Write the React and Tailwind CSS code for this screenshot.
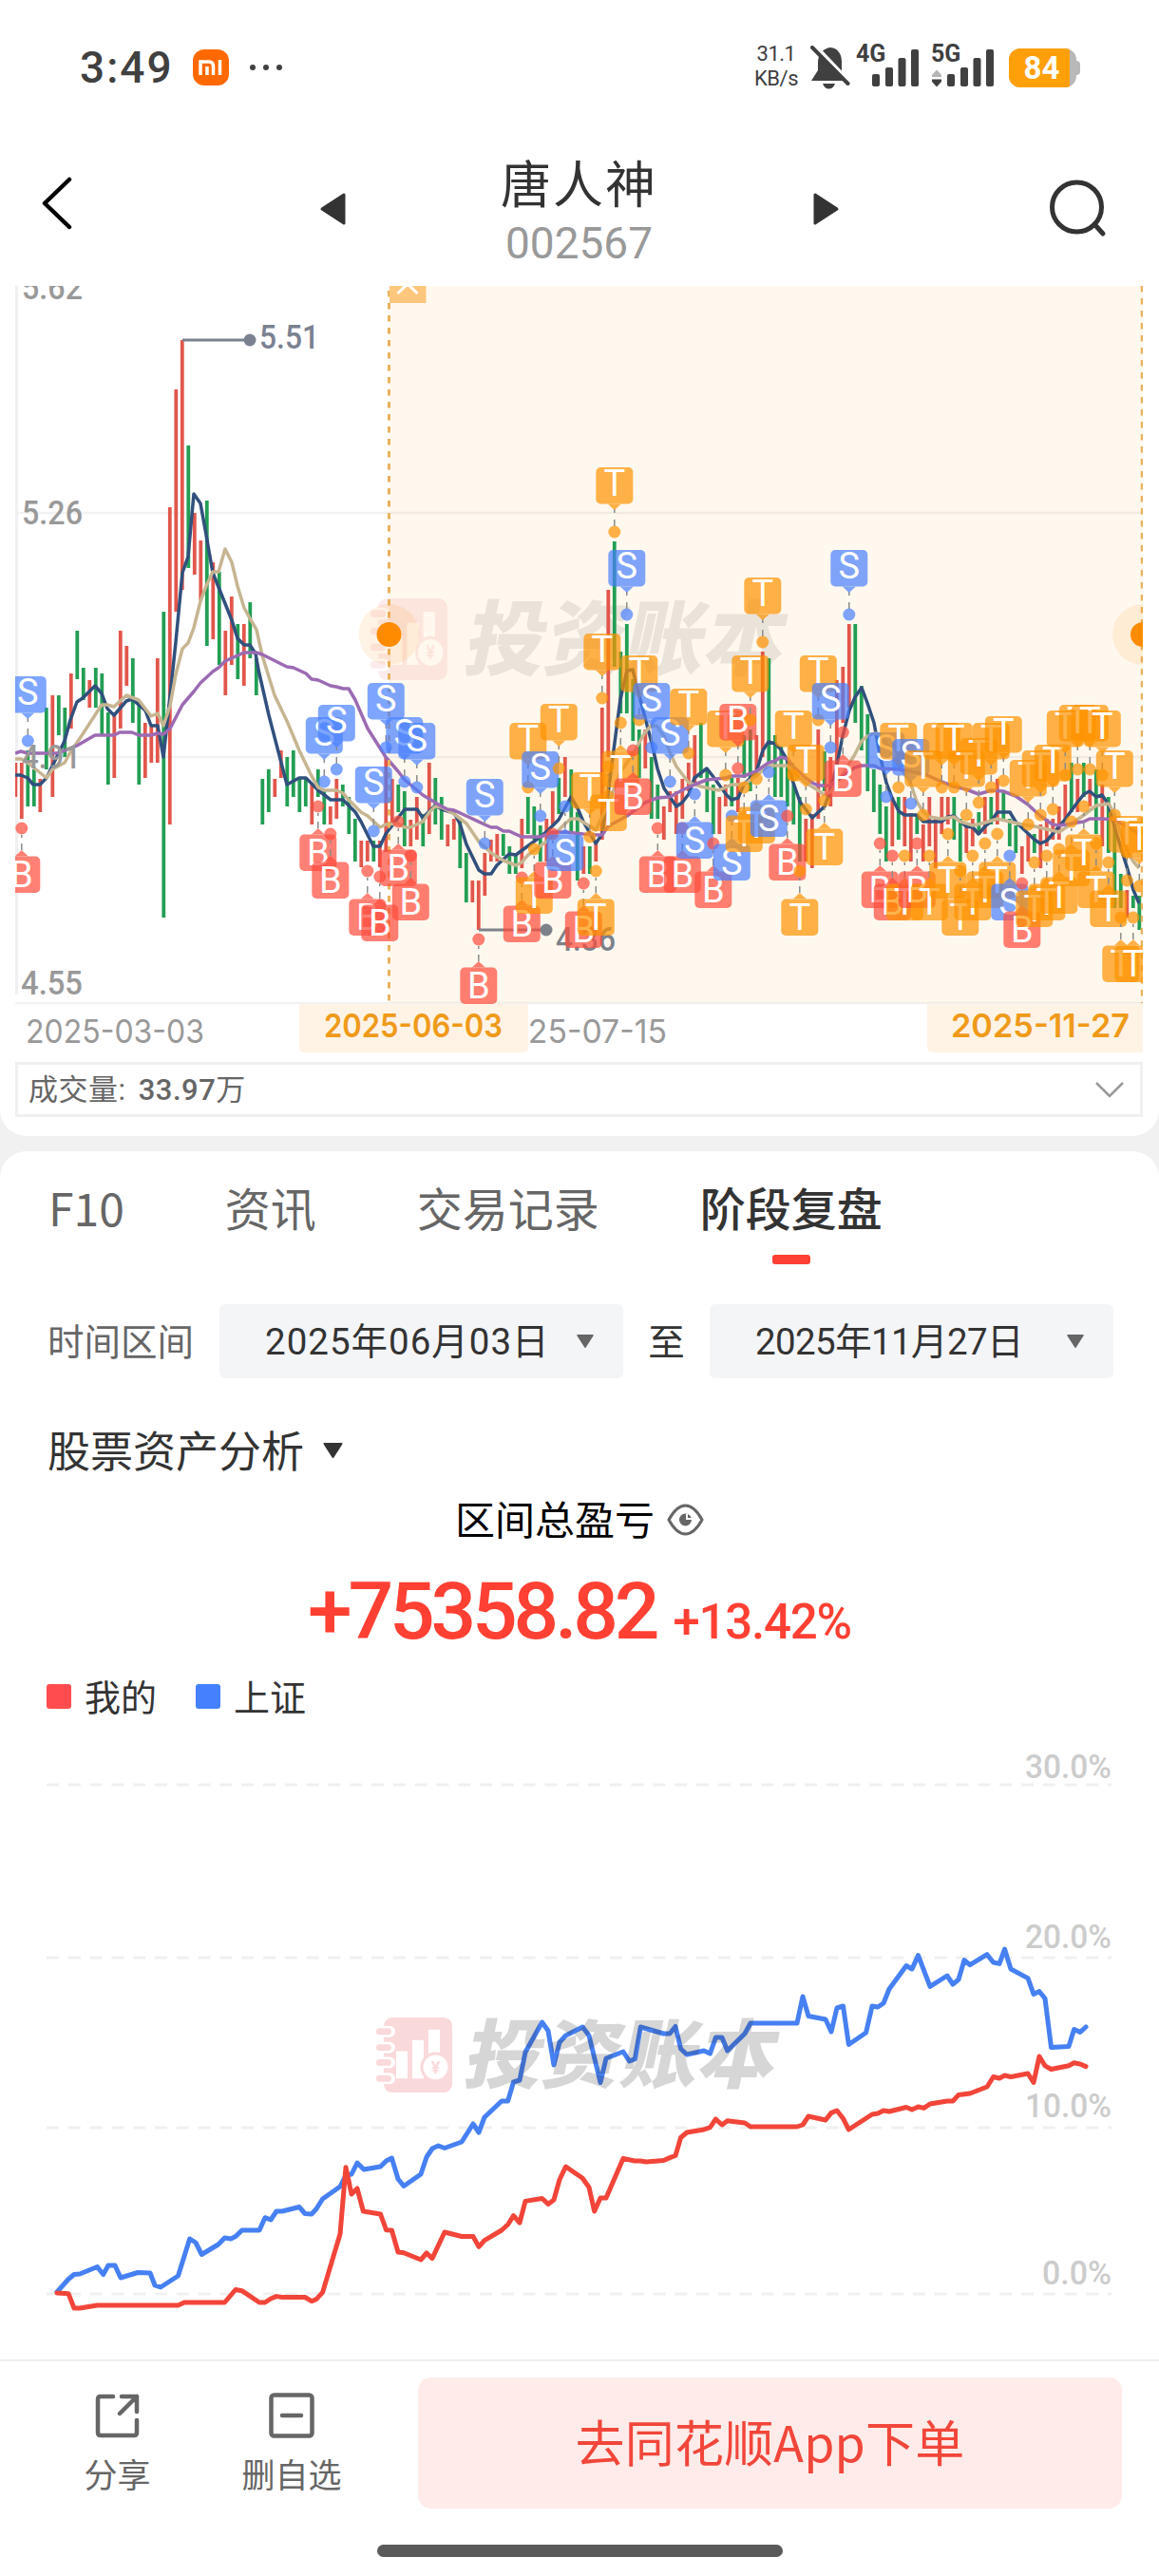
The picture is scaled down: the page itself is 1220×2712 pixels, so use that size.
import React from 'react';

const CN = "font-['Noto_Sans_CJK_SC',sans-serif]";
const NUM = "font-[Roboto,'Noto_Sans_CJK_SC',sans-serif]";

// [direction, high, low] in chart pixels, one row per trading day
const candles = [
  ['r', 803, 839], ['r', 803, 862], ['g', 790, 849], ['g', 810, 849], ['r', 820, 855], ['g', 745, 810],
  ['r', 732, 839], ['g', 732, 774], ['g', 745, 797], ['r', 709, 767], ['g', 664, 715], ['g', 703, 737],
  ['r', 716, 745], ['g', 703, 745], ['g', 709, 774], ['g', 750, 826], ['r', 752, 819], ['r', 664, 767],
  ['r', 680, 722], ['g', 693, 761], ['g', 738, 826], ['r', 761, 819], ['r', 765, 803], ['r', 693, 803],
  ['g', 644, 966], ['r', 534, 868], ['r', 410, 644], ['r', 358, 621], ['g', 469, 598], ['r', 540, 605],
  ['r', 569, 632], ['g', 527, 680], ['r', 592, 673], ['g', 602, 700], ['r', 664, 732], ['r', 628, 700],
  ['g', 657, 715], ['r', 657, 722], ['g', 634, 693], ['g', 693, 732], ['g', 820, 868], ['g', 810, 855],
  ['r', 820, 839], ['r', 790, 819], ['g', 797, 849], ['g', 790, 839], ['g', 820, 855], ['g', 820, 849],
  ['r', 826, 868], ['g', 810, 839], ['g', 833, 868], ['r', 849, 868], ['r', 820, 862], ['g', 826, 849],
  ['g', 839, 878], ['g', 862, 907], ['r', 885, 913], ['r', 885, 907], ['g', 885, 907], ['r', 885, 913],
  ['r', 797, 897], ['r', 820, 868], ['g', 826, 855], ['g', 833, 891], ['r', 863, 891], ['r', 839, 884],
  ['g', 857, 891], ['r', 803, 878], ['g', 819, 868], ['g', 839, 884], ['r', 868, 891], ['r', 862, 884],
  ['g', 862, 914], ['g', 898, 950], ['r', 927, 950], ['r', 927, 979], ['r', 898, 943], ['r', 884, 907],
  ['r', 878, 907], ['g', 878, 901], ['g', 891, 920], ['g', 898, 920], ['r', 862, 914], ['g', 839, 878],
  ['g', 849, 884], ['g', 869, 907], ['r', 862, 907], ['r', 833, 868], ['g', 819, 857], ['r', 797, 839],
  ['g', 810, 878], ['g', 855, 927], ['r', 891, 920], ['g', 891, 920], ['r', 886, 907], ['r', 745, 884],
  ['r', 621, 797], ['g', 570, 702], ['g', 686, 751], ['g', 657, 751], ['g', 715, 780], ['g', 768, 819],
  ['r', 768, 809], ['g', 797, 862], ['g', 826, 862], ['r', 849, 884], ['r', 833, 855], ['r', 833, 878],
  ['r', 820, 862], ['r', 803, 833], ['r', 774, 826], ['g', 761, 819], ['g', 809, 855], ['g', 826, 878],
  ['r', 839, 878], ['r', 826, 849], ['g', 819, 849], ['r', 819, 855], ['g', 774, 819], ['g', 768, 833],
  ['r', 774, 810], ['r', 686, 797], ['g', 693, 803], ['g', 774, 839], ['g', 786, 839], ['g', 801, 849],
  ['g', 826, 868], ['g', 839, 907], ['r', 862, 907], ['r', 857, 914], ['r', 768, 862], ['g', 791, 833],
  ['r', 797, 849], ['r', 716, 833], ['r', 702, 761], ['r', 657, 745], ['g', 657, 761], ['g', 722, 790],
  ['g', 752, 833], ['g', 810, 855], ['g', 826, 878], ['g', 849, 907], ['r', 839, 891], ['g', 839, 884],
  ['r', 839, 891], ['r', 856, 907], ['g', 857, 878], ['r', 868, 907], ['r', 839, 891], ['r', 862, 914],
  ['r', 839, 878], ['r', 839, 868], ['g', 839, 884], ['g', 862, 907], ['r', 868, 898], ['r', 862, 891],
  ['g', 855, 878], ['r', 839, 878], ['g', 839, 868], ['r', 820, 868], ['g', 832, 862], ['g', 862, 891],
  ['g', 869, 898], ['r', 891, 920], ['r', 878, 907], ['g', 878, 898], ['r', 868, 914], ['r', 862, 891],
  ['r', 862, 884], ['r', 849, 884], ['r', 826, 862], ['g', 803, 855], ['r', 820, 855], ['g', 803, 839],
  ['r', 820, 849], ['g', 810, 878], ['r', 826, 891], ['g', 839, 898], ['g', 868, 956], ['g', 920, 956],
  ['r', 937, 966], ['g', 943, 956], ['g', 943, 979],
];

// buy / sell / T marks: type, day index, u = above the candle, d = below it
const marks =
  'B1d S2u B49d S50u B51d S52u B57d S58u B59d S60u B62d S63u B64d S65u B75d S76u B82d T83u T84d S85u B87d T88u S89d B92d T93u T94d T95u T96d T97u T98d S99u B100d T101u S103u B104d S106u B108d T109u S110d B113d T115u S116d B117u T118d T119u T120d T121u S122d B125d T126u T127d T128u T130u T131d S132u B134d S135u B140d S141u B142d T143u T144d S145u B146d T147u T148d T150u T151d T152u T153d T154u T155d T156u T157d T158u T159d T160u S161d B163d T164u T165d T166u T167d T168u T169d T170u T171d T172u T173d T174u T175d T176u T177d T178u T179d T180u T181d T182u'
    .split(' ')
    .map((m) => ({ type: m[0], day: parseInt(m.slice(1), 10), up: m.endsWith('u') }));

const ma5 =
  '16,816 22,816 29,819 35,826 42,826 49,819 68,780 74,758 81,739 87,735 100,722 107,730 113,746 120,753 133,738 139,736 153,748 159,764 166,764 172,797 179,733 185,676 192,603 198,586 204,520 211,530 217,563 224,603 230,618 244,653 250,672 257,679 263,679 269,688 272,705 283,753 296,803 302,826 315,819 322,819 335,832 348,842 361,842 374,855 380,865 393,891 400,891 406,878 426,852 439,852 445,861 458,848 465,852 478,856 484,867 491,889 504,916 510,920 517,920 523,911 536,899 543,900 562,886 575,876 588,863 601,839 608,851 614,865 627,888 634,878 640,836 647,782 653,736 660,706 666,705 673,733 686,782 692,809 699,830 712,849 718,845 725,836 731,819 744,809 751,818 764,836 770,842 777,840 783,826 796,813 803,790 809,781 816,783 822,789 829,801 835,824 842,844 855,861 868,849 874,832 881,805 887,775 894,748 900,734 907,724 913,740 920,761 926,794 933,824 939,840 946,854 952,858 965,858 972,865 991,865 998,860 1004,859 1011,865 1017,870 1024,871 1030,878 1037,870 1043,865 1050,855 1063,855 1069,865 1089,884 1095,888 1102,885 1115,870 1121,863 1128,853 1134,845 1141,836 1147,833 1154,839 1160,837 1167,847 1173,870 1180,893 1186,912 1193,937 1199,951';
const ma10 =
  '16,799 22,799 29,803 49,819 55,810 68,803 74,792 87,773 107,742 113,742 120,744 133,732 146,737 159,754 166,751 172,764 179,743 185,710 192,683 198,677 204,661 211,633 217,617 224,602 230,602 237,578 244,592 250,617 257,640 263,651 270,663 276,690 289,732 302,759 315,790 328,817 335,829 341,832 354,832 361,835 367,842 380,855 387,859 400,871 406,868 419,867 426,871 432,871 445,865 452,855 458,849 465,850 478,857 491,867 504,886 517,898 530,906 543,911 549,908 556,900 575,886 588,874 595,867 601,862 608,862 621,870 627,874 640,847 653,813 666,794 679,771 686,763 692,765 699,775 705,792 712,807 725,824 738,828 751,831 757,832 770,826 783,826 796,817 809,806 829,806 835,813 848,824 861,832 868,837 874,834 881,824 887,815 900,794 907,780 913,775 920,772 926,773 933,782 946,805 959,826 965,844 972,855 978,860 991,862 1004,860 1011,865 1024,869 1037,866 1050,862 1063,865 1076,868 1089,870 1115,876 1128,867 1141,858 1154,848 1167,846 1173,857 1180,878 1186,895 1193,907 1199,914';
const ma20 =
  '16,793 22,791 29,793 61,793 81,785 100,774 120,774 126,771 139,771 146,774 159,774 166,772 172,773 179,767 192,742 204,728 211,719 224,707 230,703 237,696 257,687 270,687 276,689 302,702 309,703 322,709 328,715 335,716 348,722 354,723 361,725 367,725 374,737 387,767 406,797 419,812 426,821 445,837 465,849 471,852 478,853 510,868 517,871 523,871 530,875 536,875 549,881 569,881 582,876 595,876 614,878 627,879 634,879 640,870 660,859 679,845 692,840 705,839 718,832 731,826 744,821 764,819 770,817 783,817 796,812 809,803 816,801 822,797 829,799 835,807 848,819 855,824 861,827 874,827 887,817 900,808 907,806 920,806 926,809 946,810 959,812 972,815 978,817 991,823 1004,828 1017,831 1030,836 1037,834 1043,832 1056,833 1069,838 1082,847 1095,859 1108,868 1115,869 1128,867 1134,866 1141,865 1147,862 1160,862 1173,863 1180,867 1193,874 1199,878';

const indexLine =
  '60,2412 72,2398.5 78,2393.5 84,2393 102.4,2385.5 108.7,2393.5 114,2384 121,2384 127,2397 145,2391.5 158,2392 163,2405 169,2407 187.5,2395 199.7,2356 206,2360 212.3,2372.5 229.7,2362 236.5,2355 243,2356 248,2353.5 254.6,2347 273,2347 279,2333.7 285,2336 291,2327 297,2327 315,2322.5 321,2329.5 328,2330 333,2324.5 339.6,2314 358,2301 364,2289 370,2288 376,2276 383,2283 400.5,2280 406.5,2274 412.4,2271 419,2293 425,2300.5 443,2288 449,2270 455,2261 461.4,2258 468,2260.5 486,2254 498,2235 504,2244 510,2228 528,2211 534.6,2211 540.5,2191 547,2189 553,2159.5 570.6,2128 577,2137 583,2173 589,2149 595.5,2142 613.3,2133 620,2142 632,2191.5 638,2166 656,2159 662.5,2169 668.4,2166.6 674.3,2133 698.5,2140 705,2140 711,2132.5 716.6,2156 723,2162 741,2158 747.5,2161 753.4,2144 760,2144 765.7,2158 784,2140 790,2129 839,2129 845,2101 851,2121.5 869,2125 875,2138 881,2113 887.5,2111 893.4,2151.5 911.6,2139 918,2111 924,2112 930,2108 936,2093 954,2068.5 960,2072 966.5,2057.6 979,2090.4 997,2079 1003,2088 1009,2083 1015,2062.6 1021,2067.7 1039,2056.7 1045.6,2065 1052,2066.4 1057.5,2051 1064,2072 1082,2081.6 1088,2098.4 1094,2095.5 1100,2103 1106.5,2154.4 1125,2153.6 1130.6,2135.5 1137,2138.4 1143,2133';
const mineLine =
  '60,2413 72,2413.7 78,2429 84,2429 102.4,2426 187.5,2426 194,2423 236.5,2423 248,2409.5 254.6,2410.7 273,2423 279,2423 285,2419 291,2416.6 297,2417.5 321,2417.5 328,2421.7 333,2419.6 339.6,2412.4 358,2351 364,2280.7 370,2309 376,2303 382.4,2327 400.5,2330 406.5,2346.7 412.4,2347 419,2370 425,2370.7 443,2378 449,2371 455,2376.6 468,2349 486,2353.5 498,2353.5 504,2364.4 510,2357.7 528,2347 534.6,2341 540.5,2331.6 547,2339 553,2316.4 570.6,2313.5 577,2319.4 583,2315 589,2293.7 595.5,2280 613,2292 620,2301.7 625.7,2327 632,2313 638,2313 656,2271.4 668,2274 674,2274 680,2275 698.5,2273.5 705,2270.6 711,2268.5 716.6,2249.5 723,2244 741,2241 747.5,2238.6 753.4,2230 760,2236 765.7,2231.8 784,2234 790,2238 839,2238 845,2236 851,2227 869,2231 875,2223.4 881,2221 887.5,2229.3 893.4,2241 918,2225 924,2224 930,2221 936,2222 954,2217.5 960,2220 966.5,2217 972.5,2218.4 979,2214 997,2211 1003,2211 1009,2204.5 1021,2203 1039,2196 1045.6,2185.5 1052,2187 1057.5,2184 1064,2185.5 1082,2182 1088,2191.4 1094,2164 1100,2173.8 1106.5,2177.5 1125,2173.8 1130.6,2170.8 1137,2172 1143,2174.6';

const markColor = { B: '#ff4b3b', S: '#4880ff', T: '#ff9300' };
const dayX = (i) => 16.3 + 6.5 * i;

const Mark = ({ type, day, up }) => {
  const x = dayX(day);
  const y = up ? candles[day][1] - 10 : candles[day][2] + 10;
  const top = up ? y - 68 : y + 29.5;
  const color = markColor[type];
  const tip = up
    ? `M${x - 7} ${top + 38.5}L${x} ${top + 45}L${x + 7} ${top + 38.5}Z`
    : `M${x - 7} ${top}L${x} ${top - 6.5}L${x + 7} ${top}Z`;
  return (
    <g>
      <line x1={x} x2={x} y1={up ? y - 24 : y + 7} y2={up ? y - 6 : y + 23} stroke="#8c8c8c" strokeWidth="1.5" strokeDasharray={up ? '4 7 7 9' : '3 6 8 9'} />
      <g fill={color} opacity="0.7">
        <circle cx={x} cy={y} r="6.5" />
        <rect x={x - 19.5} y={top} width="39" height="38.5" rx="5" />
        <path d={tip} />
      </g>
      <text x={x} y={top + (up ? 29.5 : 32.5)} textAnchor="middle" fontSize="38" fill="#fff">{type}</text>
    </g>
  );
};

const Watermark = ({ x, y, w, h, textX, textWidth, opacity }) => (
  <g opacity={opacity}>
    <g transform={`translate(${x} ${y}) scale(${w / 72} ${h / 80})`}>
      <rect width="72" height="80" rx="9" fill="#e8323c" />
      {[15, 32, 48, 65].map((cy) => (
        <g key={cy}>
          <rect x="-10" y={cy - 6} width="22" height="12" rx="6" fill="#fff" />
          <rect x="-8" y={cy - 3.5} width="16" height="7" rx="3.5" fill="#e8323c" />
        </g>
      ))}
      <path d="M13 36h12v29h-12zM30 24h12v41h-12zM47 13h12v26h-12z" fill="#fff" />
      <circle cx="54.500" cy="53" r="16" fill="#e8323c" />
      <circle cx="54.500" cy="53" r="13" fill="#fff" />
      <text x="54.500" y="60" textAnchor="middle" fontSize="18" fontWeight="700" fill="#e8323c">¥</text>
    </g>
    <text
      transform={`translate(${textX} ${y + h * 0.86}) skewX(-12)`}
      fontSize={h}
      fontWeight="900"
      textLength={textWidth}
      lengthAdjust="spacingAndGlyphs"
      fill="#222"
    >
      投资账本
    </text>
  </g>
);

const KLineChart = () => (
  <svg className={`mx-4 block h-[809px] w-[1187px] shrink-0 ${NUM}`} viewBox="16 301 1187 809">
    <rect x="410" y="301" width="793" height="755" fill="#fff8ee" />
    <path d="M17.500 301V1047" stroke="#f0f0f0" strokeWidth="3" />
    <path d="M19 540H1203M19 797H1203M16 1056H1203" stroke="#000" strokeOpacity="0.05" strokeWidth="2.500" />
    <Watermark x={398} y={630} w={73} h={86} textX={486} textWidth={336} opacity={0.09} />

    {candles.map(([dir, high, low], i) => (
      <path key={i} d={`M${dayX(i)} ${high}V${low}`} stroke={dir === 'r' ? '#e2564b' : '#229e54'} strokeWidth="3.800" />
    ))}
    <g fill="none" strokeWidth="3.500" strokeLinejoin="round">
      <polyline points={ma5} stroke="#31507d" />
      <polyline points={ma10} stroke="#c6b591" />
      <polyline points={ma20} stroke="#9c6bb3" />
    </g>

    {/* highest / lowest price callouts */}
    <g stroke="#7a8291" fill="#7a8291" fontWeight="500">
      <path d="M192 358H263" strokeWidth="3" />
      <circle cx="263" cy="358" r="6.500" stroke="none" />
      <text x="273" y="367" fontSize="35" textLength="63" lengthAdjust="spacingAndGlyphs" stroke="none">5.51</text>
    </g>
    <g stroke="#7d828a" fill="#7d828a" fontWeight="500">
      <path d="M504 979H575" strokeWidth="3" />
      <circle cx="575" cy="979" r="6.500" stroke="none" />
      <text x="585" y="1001" fontSize="35" textLength="63" lengthAdjust="spacingAndGlyphs" stroke="none">4.36</text>
    </g>

    <path d="M409.500 306V1056" stroke="#e8b25c" strokeWidth="3" strokeDasharray="6.500 6.500" />
    <path d="M1202 301V1056" stroke="#e8b25c" strokeWidth="2.500" strokeDasharray="6.500 6.500" />
    <rect x="410" y="301" width="38.500" height="18" fill="#ffc77d" />
    <path d="M418.500 309L429 299L439.500 309" stroke="#fff" strokeWidth="3" fill="none" />

    {marks.map((m) => (
      <Mark key={m.type + m.day} {...m} />
    ))}

    {[409.5, 1203].map((cx) => (
      <g key={cx} fill="#ff8c00">
        <circle cx={cx} cy="668" r="32" opacity="0.1" />
        <circle cx={cx} cy="668" r="13" />
      </g>
    ))}

    <g fontSize="35" fill="#999" fontWeight="500">
      <text x="23" y="315" textLength="64" lengthAdjust="spacingAndGlyphs">5.62</text>
      <text x="23" y="552" textLength="64" lengthAdjust="spacingAndGlyphs">5.26</text>
      <text x="23" y="809" textLength="62" lengthAdjust="spacingAndGlyphs">4.91</text>
      <text x="22" y="1047" textLength="65" lengthAdjust="spacingAndGlyphs">4.55</text>
    </g>

    <g className="font-[Inter,sans-serif]" fontSize="34.500">
      <g fill="#999">
        <text x="27" y="1098" textLength="188" lengthAdjust="spacingAndGlyphs">2025-03-03</text>
        <text x="514" y="1098" textLength="188" lengthAdjust="spacingAndGlyphs">2025-07-15</text>
      </g>
      <path d="M315 1057H556V1103Q556 1108 551 1108H320Q315 1108 315 1103Z" fill="#fff3e5" />
      <path d="M976 1057H1203V1108H981Q976 1108 976 1103Z" fill="#fff3e5" />
      <g fill="#f09a1a" fontWeight="600">
        <text x="341" y="1092" textLength="188" lengthAdjust="spacingAndGlyphs">2025-06-03</text>
        <text x="1001" y="1092" textLength="188" lengthAdjust="spacingAndGlyphs">2025-11-27</text>
      </g>
    </g>
  </svg>
);

const ProfitChart = () => (
  <svg className={`mt-[13px] block h-[640px] w-full shrink-0 ${NUM}`} viewBox="0 1822 1220 640">
    <path d="M49 1878H1170M49 2060H1170M49 2239H1170M49 2414H1170" stroke="#f0f0f0" strokeWidth="3" strokeDasharray="13 9.800" />
    <g fill="none" strokeWidth="5" strokeLinejoin="round" strokeLinecap="round">
      <polyline points={indexLine} stroke="#4680f2" />
      <polyline points={mineLine} stroke="#f2453a" />
    </g>
    <Watermark x={404} y={2123} w={72} h={79} textX={486} textWidth={328} opacity={0.18} />
    <g fontSize="35" fill="#ccc" fontWeight="500">
      <text x="1079" y="1871" textLength="91" lengthAdjust="spacingAndGlyphs">30.0%</text>
      <text x="1079" y="2050" textLength="91" lengthAdjust="spacingAndGlyphs">20.0%</text>
      <text x="1079" y="2228" textLength="91" lengthAdjust="spacingAndGlyphs">10.0%</text>
      <text x="1097" y="2404" textLength="73" lengthAdjust="spacingAndGlyphs">0.0%</text>
    </g>
  </svg>
);

const Signal = ({ label, children }) => (
  <div className="relative h-[44px] w-[66px]">
    <span className="absolute -top-[4px] left-0 text-[25px] leading-[24px] font-bold">{label}</span>
    <svg className="h-[44px] w-[66px]" viewBox="0 0 66 44" fill="#404040">
      <rect x="17" y="29" width="8" height="13" rx="2" />
      <rect x="31" y="22" width="8" height="20" rx="2" />
      <rect x="44.500" y="12" width="8" height="30" rx="2" />
      <rect x="58" y="3" width="8" height="39" rx="2" />
      {children}
    </svg>
  </div>
);

const StatusBar = () => (
  <div className={`flex h-[142px] shrink-0 items-center pr-[83px] pl-[84px] text-[#404040] ${NUM}`}>
    <span className="text-[46px] leading-none font-medium tracking-[2px]">3:49</span>
    <div className="ml-[20px] flex size-[38px] items-center justify-center rounded-[12px] bg-[#ff6900]">
      <svg className="h-[16px] w-[25px]" viewBox="0 0 25 16" fill="none" stroke="#fff" strokeWidth="3.500">
        <path d="M2 16V2H11Q15.500 2 15.500 7V16M9 7V16M22.500 0V16" />
      </svg>
    </div>
    <div className="ml-[22px] flex gap-[8px]">
      <i className="size-[6px] rounded-full bg-[#404040]" />
      <i className="size-[6px] rounded-full bg-[#404040]" />
      <i className="size-[6px] rounded-full bg-[#404040]" />
    </div>
    <div className="ml-auto -mt-[3px] text-center text-[22px] leading-[26px] tracking-[-0.500px]">
      <div>31.1</div>
      <div>KB/s</div>
    </div>
    <svg className="ml-[13px] h-[46px] w-[42px]" viewBox="0 0 42 46">
      <path d="M20 2C12 4 8 10 8 18V26L1 37H38L33 27V17C33 8 28 2 20 2ZM13 40H26Q24 45.500 19.500 45.500T13 40Z" fill="#404040" />
      <path d="M5 0L42 39" stroke="#fff" strokeWidth="4" />
      <path d="M2 2L39.500 40" stroke="#404040" strokeWidth="4" strokeLinecap="round" />
    </svg>
    <div className="ml-[6px] flex gap-[13px]">
      <Signal label="4G" />
      <Signal label="5G">
        <path d="M1 32V30L6 24.500L11 30V32Z" fill="#b5b5b5" />
        <path d="M1 34.500H11V37L6 42.500L1 37Z" />
      </Signal>
    </div>
    <div className="ml-[16px] flex items-center">
      <div className="flex h-[41px] w-[71px] overflow-hidden rounded-[12px] bg-[#b8b8b8]">
        <div className="flex w-[64px] items-center justify-center bg-[#ffa00a] pl-[5px] text-[33px] leading-none font-bold text-white">84</div>
      </div>
      <div className="h-[15px] w-[4px] rounded-r-[4px] bg-[#b8b8b8]" />
    </div>
  </div>
);

const Header = () => (
  <div className="flex h-[159px] shrink-0 items-start justify-between pr-[54px] pl-[43px]">
    <svg className="mt-[44px] h-[56px] w-[34px]" viewBox="0 0 34 56" fill="none" stroke="#000" strokeWidth="4.500" strokeLinecap="round" strokeLinejoin="round">
      <path d="M30 3L4 28L30 53" />
    </svg>
    <div className="ml-[38px] flex w-[548px] items-start justify-between">
      <svg className="mt-[60px] h-[36px] w-[28px]" viewBox="0 0 28 36" fill="#333" stroke="#333" strokeWidth="3" strokeLinejoin="round">
        <path d="M26 3V33L3 18Z" />
      </svg>
      <div className="flex flex-col items-center">
        <div className={`mt-[21px] text-[53px] leading-[56px] tracking-[2px] text-[#333] ${CN}`}>唐人神</div>
        <div className={`mt-[12px] text-[46px] leading-[50px] text-[#999] ${NUM}`}>002567</div>
      </div>
      <svg className="mt-[60px] h-[36px] w-[28px]" viewBox="0 0 28 36" fill="#333" stroke="#333" strokeWidth="3" strokeLinejoin="round">
        <path d="M2 3V33L25 18Z" />
      </svg>
    </div>
    <svg className="mt-[47px] h-[62px] w-[62px]" viewBox="0 0 62 62" fill="none" stroke="#333" strokeWidth="5" strokeLinecap="round">
      <circle cx="29.500" cy="29" r="26" />
      <path d="M48 47L57 57" />
    </svg>
  </div>
);

const Caret = ({ className }) => (
  <svg className={className} viewBox="0 0 20 16" fill="currentColor" stroke="currentColor" strokeWidth="2" strokeLinejoin="round">
    <path d="M1 1H19L10 15Z" />
  </svg>
);

const DateSelect = ({ className, children }) => (
  <div className="flex h-[78px] w-[425px] items-center justify-between rounded-md bg-[#f4f5f7] pr-[31px] pl-[48px]">
    <span className={`pt-[3px] text-[38.500px] leading-none text-[#333] ${NUM} ${className}`}>{children}</span>
    <Caret className="h-[14px] w-[18px] text-[#666]" />
  </div>
);

const tabs = ['F10', '资讯', '交易记录', '阶段复盘'];

const App = () => {
  const active = 3;
  return (
    <div className={`flex h-[2712px] w-[1220px] flex-col overflow-hidden bg-[#f1f1f1] ${CN}`}>
      <div className="flex shrink-0 flex-col rounded-b-[28px] bg-white pb-5">
        <StatusBar />
        <Header />
        <KLineChart />
        <div className="mx-4 mt-2 flex h-[58px] w-[1187px] items-center justify-between border-[3px] border-[#f0f0f0] pr-[16px] pl-[11px]">
          <div className={`text-[31px] leading-none tracking-[0.500px] text-[#666] ${NUM}`}>
            成交量: <b className="ml-[5px] font-medium">33.97</b>万
          </div>
          <svg className="h-[18px] w-[32px]" viewBox="0 0 32 18" fill="none" stroke="#999" strokeWidth="2.500">
            <path d="M2 2L16 16L30 2" />
          </svg>
        </div>
      </div>

      <div className="mt-4 flex grow flex-col rounded-t-[28px] bg-white">
        <div className="flex h-[126px] shrink-0 gap-[106px] pl-[51px]">
          {tabs.map((tab, i) => (
            <div key={tab} className="flex flex-col items-center">
              <div className={i === active ? 'mt-[30px] text-[48px] leading-[56px] font-medium text-[#333]' : 'mt-[30px] text-[48px] leading-[56px] text-[#666]'}>
                {tab}
              </div>
              {i === active && <div className="mt-[23px] h-[10px] w-[40px] rounded-[3px] bg-[#ff4033]" />}
            </div>
          ))}
        </div>

        <div className="mt-[35px] flex h-[78px] shrink-0 items-center pl-[50px] text-[38.500px] leading-none">
          <span className="w-[181px] pb-[3px] text-[#666]">时间区间</span>
          <DateSelect className="tracking-[1px]">2025年06月03日</DateSelect>
          <span className="w-[91px] pb-[3px] text-center text-[#333]">至</span>
          <DateSelect className="tracking-[-0.600px]">2025年11月27日</DateSelect>
        </div>

        <div className="mt-[52px] flex h-[48px] shrink-0 items-center gap-[20px] pl-[50px] text-[45px] leading-none text-[#333]">
          <span className="pb-[4px]">股票资产分析</span>
          <Caret className="h-[16px] w-[21px]" />
        </div>

        <div className="mt-[27px] flex h-[44px] shrink-0 items-center justify-center gap-[13px] text-[42px] leading-none text-black">
          <span className="pb-[5px]">区间总盈亏</span>
          <svg className="h-[34px] w-[39px]" viewBox="0 0 39 34" fill="none" stroke="#666" strokeWidth="3">
            <path d="M2 17C8 6 13 2 19.500 2S31 6 37 17C31 28 26 32 19.500 32S8 28 2 17Z" />
            <circle cx="19.500" cy="17" r="6.500" fill="#666" stroke="none" />
            <path d="M21 11V16H26" stroke="#fff" strokeWidth="2" />
          </svg>
        </div>

        <div className={`mt-[29px] flex h-[92px] shrink-0 items-baseline justify-center gap-[18px] text-[#ff4033] ${NUM}`}>
          <span className="text-[84px] leading-[92px] font-medium tracking-[-4.200px]">+75358.82</span>
          <span className="text-[51px] leading-none font-medium tracking-[-1.200px]">+13.42%</span>
        </div>

        <div className="mt-[19px] flex h-[48px] shrink-0 items-center pl-[49px] text-[38px] leading-none text-[#333]">
          <i className="mr-[14px] size-[26px] rounded-[3px] bg-[#ff4d4f]" />
          <span className="pb-[3px]">我的</span>
          <i className="mr-[14px] ml-[41px] size-[26px] rounded-[3px] bg-[#4480ff]" />
          <span className="pb-[3px]">上证</span>
        </div>

        <ProfitChart />
        <div className="grow" />

        <div className="flex h-[228px] shrink-0 flex-col border-t-2 border-[#f0f0f0] text-[35px] leading-none text-[#666]">
          <div className="flex pt-[17px] pl-[88px]">
            <div className="flex w-[71px] flex-col items-center">
              <svg className="mt-[16px] h-[48px] w-[48px]" viewBox="0 0 48 48" fill="none" stroke="#666" strokeWidth="4.500" strokeLinecap="round" strokeLinejoin="round">
                <path d="M19 4H6Q3 4 3 7V42Q3 45 6 45H41Q44 45 44 42V29M28 4H44V20M44 4L26 22" />
              </svg>
              <span className="mt-[19px] whitespace-nowrap">分享</span>
            </div>
            <div className="ml-[95px] flex w-[106px] flex-col items-center">
              <svg className="mt-[16px] h-[48px] w-[48px]" viewBox="0 0 48 48" fill="none" stroke="#666" strokeWidth="4.500" strokeLinecap="round">
                <rect x="2.500" y="2.500" width="43" height="43" rx="3" />
                <path d="M14 24H34" />
              </svg>
              <span className="mt-[19px] whitespace-nowrap">删自选</span>
            </div>
            <div className="ml-[80px] flex h-[138px] w-[741px] items-center justify-center rounded-[14px] bg-[#ffebe9] pb-[5px] text-[52px] tracking-[0.200px] text-[#f2463a]">
              去同花顺App下单
            </div>
          </div>
          <div className="mx-auto mt-[38px] h-[13px] w-[427px] rounded-full bg-[#5a5a5a]" />
        </div>
      </div>
    </div>
  );
};

export default App;
